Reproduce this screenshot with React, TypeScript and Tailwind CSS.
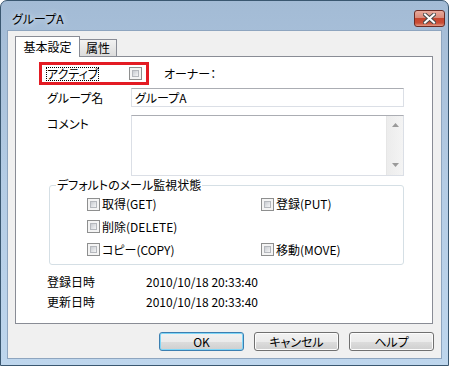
import React from 'react';

const font = "font-['Noto_Sans_CJK_JP','Noto_Sans',sans-serif] [font-feature-settings:'palt']";

const Check: React.FC = () => (
  <span className="block w-[13px] h-[13px] shrink-0 border border-[#8e8f8f] bg-[#f4f4f4] p-[2px]">
    <span className="block w-full h-full border border-[#b5b8bd] bg-gradient-to-br from-[#c9ccd1] to-[#f4f5f6]" />
  </span>
);

const CheckItem: React.FC<{ label: string }> = ({ label }) => (
  <div className="flex items-center gap-[2px]">
    <Check />
    <span>{label}</span>
  </div>
);

const Button: React.FC<{ label: string; primary?: boolean }> = ({ label, primary }) => (
  <button
    className={
      primary
        ? 'w-[85px] h-[19px] rounded-[3px] border border-[#3c7fb1] shadow-[inset_0_0_0_1px_#7fd6f7] bg-[linear-gradient(to_bottom,#f2f2f2_0%,#ebebeb_50%,#dddddd_50%,#cfcfcf_100%)] flex items-center justify-center'
        : 'w-[85px] h-[19px] rounded-[3px] border border-[#707070] shadow-[inset_0_0_0_1px_#fcfcfc] bg-[linear-gradient(to_bottom,#f2f2f2_0%,#ebebeb_50%,#dddddd_50%,#cfcfcf_100%)] flex items-center justify-center'
    }
  >
    {label}
  </button>
);

export default function App() {
  return (
    <div className={`w-[449px] h-[366px] overflow-hidden bg-white text-[12px] leading-[14px] text-black ${font}`}>
      <div className="h-full flex flex-col rounded-t-[7px] border border-[#3a5770] bg-gradient-to-b from-[#a3bbd5] via-[#b4cce5] to-[#bed6ed] px-[6px] pb-[6px]">
        {/* Title bar */}
        <div className="h-[29px] flex items-start justify-between shrink-0">
          <span className="mt-[11px] ml-[5px] [text-shadow:0_0_6px_#ffffff]">グループA</span>
          <div className="mt-[9px] -mr-[3px] w-[31px] h-[17px] rounded-[3px] border border-[#6b2b24] bg-[linear-gradient(to_bottom,#e9aa9c_0%,#d98b7b_45%,#c6452e_50%,#c94d36_80%,#e29a85_100%)] flex items-center justify-center">
            <svg width="13" height="11" viewBox="0 0 13 11">
              <path d="M2 1.5 L11 9.5 M11 1.5 L2 9.5" stroke="#4a4a4a" strokeWidth="4" strokeLinecap="square" />
              <path d="M2 1.5 L11 9.5 M11 1.5 L2 9.5" stroke="#ffffff" strokeWidth="2" strokeLinecap="square" />
            </svg>
          </div>
        </div>

        {/* Client area */}
        <div className="flex-1 border border-[#8ea5bf] bg-[#f0f0f0] flex flex-col pt-[5px] pl-[7px] pr-[8px]">
          {/* Tabs */}
          <div className="flex items-end h-[20px]">
            <div className="relative z-10 -mb-px w-[65px] h-[21px] border border-b-0 border-[#898c95] bg-white flex items-center justify-center pb-[1px]">
              基本設定
            </div>
            <div className="w-[37px] h-[17px] border-t border-r border-[#898c95] bg-gradient-to-b from-[#f2f2f2] to-[#dcdcdc] flex items-center justify-center">
              属性
            </div>
          </div>

          {/* Tab panel */}
          <div className="h-[268px] border border-[#898c95] bg-white pl-[31px] pr-[28px] pt-[5px] flex flex-col">
            {/* Active row */}
            <div className="flex items-center">
              <div className="-ml-[8px] w-[110px] h-[23px] border-[3px] border-[#e31b23] pl-[4px] pr-[4px] flex items-center justify-between">
                <span className="border border-dotted border-black h-[14px] flex items-center leading-[12px]">アクティブ</span>
                <Check />
              </div>
              <span className="ml-[15px]">オーナー：</span>
            </div>

            {/* Group name */}
            <div className="mt-[3px] flex items-center">
              <span className="w-[84px] shrink-0">グループ名</span>
              <div className="flex-1 h-[19px] border border-[#dbdfe6] border-t-[#abadb3] bg-white pl-[3px] flex items-center">
                グループA
              </div>
            </div>

            {/* Comment */}
            <div className="mt-[8px] flex items-start">
              <span className="w-[84px] shrink-0 pt-[2px]">コメント</span>
              <div className="flex-1 h-[61px] border border-[#dbdfe6] border-t-[#abadb3] bg-white flex justify-end">
                <div className="w-[17px] h-full border-l border-[#e6e6e6] bg-gradient-to-r from-[#ececec] to-[#f4f4f4] flex flex-col justify-between">
                  <div className="h-[17px] flex items-center justify-center">
                    <svg width="7" height="4" viewBox="0 0 7 4"><path d="M3.5 0 L7 4 L0 4 Z" fill="#9a9a9a" /></svg>
                  </div>
                  <div className="h-[17px] flex items-center justify-center pb-[3px]">
                    <svg width="7" height="4" viewBox="0 0 7 4"><path d="M0 0 L7 0 L3.5 4 Z" fill="#9a9a9a" /></svg>
                  </div>
                </div>
              </div>
            </div>

            {/* Default mail monitor state */}
            <fieldset className="mt-[2px] ml-[2px] border border-[#d5dfe5] rounded-[3px] pt-[1px] pb-[3px]">
              <legend className="ml-[6px] px-[1px] leading-[14px]">デフォルトのメール監視状態</legend>
              <div className="pl-[37px] grid grid-cols-[174px_1fr] grid-rows-[22px_23px_23px] items-center">
                <CheckItem label="取得(GET)" />
                <CheckItem label="登録(PUT)" />
                <CheckItem label="削除(DELETE)" />
                <div />
                <CheckItem label="コピー(COPY)" />
                <CheckItem label="移動(MOVE)" />
              </div>
            </fieldset>

            {/* Dates */}
            <div className="mt-[9px] flex flex-col gap-[4px]">
              <div className="h-[16px] flex items-center">
                <span className="w-[99px] shrink-0">登録日時</span>
                <span>2010/10/18 20:33:40</span>
              </div>
              <div className="h-[16px] flex items-center">
                <span className="w-[99px] shrink-0">更新日時</span>
                <span>2010/10/18 20:33:40</span>
              </div>
            </div>
          </div>

          {/* Buttons */}
          <div className="mt-[8px] flex justify-end gap-[10px] -mr-px">
            <Button label="OK" primary />
            <Button label="キャンセル" />
            <Button label="ヘルプ" />
          </div>
        </div>
      </div>
    </div>
  );
}
